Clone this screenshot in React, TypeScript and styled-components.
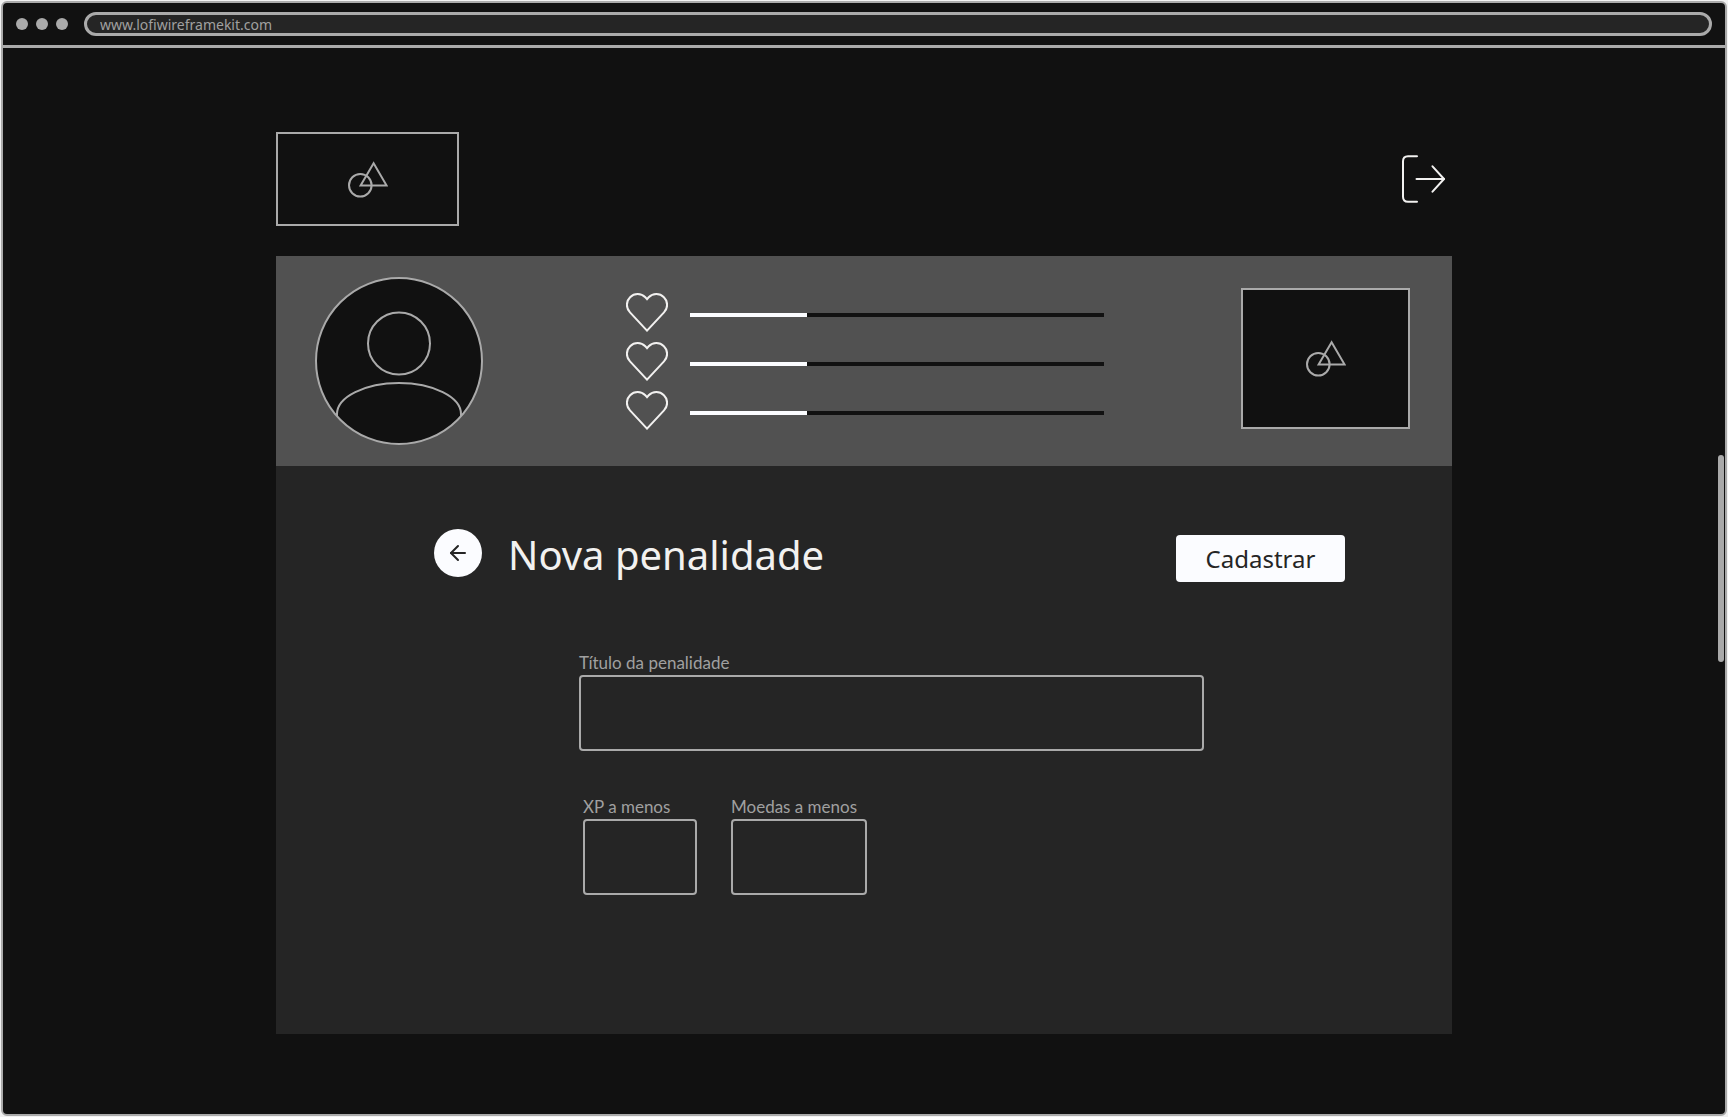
import React from 'react';
import styled, { createGlobalStyle } from 'styled-components';
import { ArrowLeft } from 'lucide-react';

const color = {
  ink: '#111111',
  surface: '#252525',
  band: '#515151',
  line: '#aaaaaa',
  label: '#a0a0a0',
  text: '#f2f1f0',
  light: '#fbfcff',
};

const displayFont = '"Noto Sans", "Open Sans", sans-serif';
const labelFont = 'Lato, "Noto Sans", sans-serif';

const GlobalStyle = createGlobalStyle`
  *, *::before, *::after { box-sizing: border-box; }
  body {
    margin: 0;
    background: #f1f1f1;
    font-family: ${displayFont};
  }
`;

const Page = styled.div`
  min-height: 100vh;
  padding: 1px;
  display: flex;
`;

const BrowserWindow = styled.div`
  flex: 1;
  min-width: 0;
  display: flex;
  flex-direction: column;
  border: 2px solid ${color.line};
  border-radius: 6px;
  background: ${color.ink};
`;

const BrowserBar = styled.header`
  display: flex;
  align-items: center;
  gap: 16px;
  height: 45px;
  padding: 0 13px;
  border-bottom: 3px solid ${color.line};
`;

const Dots = styled.div`
  display: flex;
  gap: 8px;
`;

const Dot = styled.span`
  width: 12px;
  height: 12px;
  border-radius: 50%;
  background: ${color.line};
`;

const AddressInput = styled.input`
  flex: 1;
  min-width: 0;
  height: 24px;
  padding: 0 13px;
  border: 3px solid ${color.line};
  border-radius: 12px;
  background: ${color.surface};
  color: ${color.label};
  font-family: ${displayFont};
  font-size: 14px;
  line-height: 18px;
`;

const Content = styled.div`
  width: 100%;
  max-width: 1176px;
  margin: 0 auto;
  padding: 84px 0 80px;
  display: flex;
  flex-direction: column;
  gap: 30px;
`;

const TopBar = styled.div`
  display: flex;
  align-items: center;
  justify-content: space-between;
  padding-right: 7px;
`;

const Placeholder = styled.div<{ $width: number; $height: number }>`
  flex: none;
  display: flex;
  align-items: center;
  justify-content: center;
  width: ${(p) => p.$width}px;
  height: ${(p) => p.$height}px;
  border: 2px solid ${color.line};
  background: ${color.ink};
`;

const IconButton = styled.button`
  display: flex;
  padding: 0;
  border: 0;
  background: none;
  color: ${color.text};
  cursor: pointer;
`;

const Panel = styled.main`
  background: ${color.surface};
`;

const PlayerBand = styled.section`
  display: flex;
  align-items: center;
  height: 210px;
  padding: 0 42px 0 39px;
  background: ${color.band};
`;

const ItemSlot = styled.div`
  padding-bottom: 5px;
`;

const Stats = styled.div`
  flex: 1;
  min-width: 0;
  display: flex;
  flex-direction: column;
  gap: 10px;
  margin: 1px 137px 0 143px;
`;

const StatRow = styled.div`
  display: flex;
  align-items: center;
  gap: 22px;
  color: ${color.text};
`;

const Meter = styled.progress`
  appearance: none;
  display: block;
  flex: 1;
  min-width: 0;
  height: 4px;
  margin-top: 5px;
  border: 0;
  background: ${color.ink};

  &::-webkit-progress-bar {
    background: ${color.ink};
  }
  &::-webkit-progress-value {
    background: ${color.light};
  }
  &::-moz-progress-bar {
    background: ${color.light};
  }
`;

const TitleRow = styled.div`
  display: flex;
  justify-content: space-between;
  height: 53px;
  margin: 63px 107px 0 158px;
`;

const TitleGroup = styled.div`
  display: flex;
  align-items: flex-start;
  gap: 26px;
`;

const BackButton = styled.button`
  flex: none;
  display: flex;
  align-items: center;
  justify-content: center;
  width: 48px;
  height: 48px;
  padding: 0;
  border: 0;
  border-radius: 50%;
  background: ${color.light};
  color: ${color.surface};
  cursor: pointer;
`;

const Title = styled.h1`
  margin: 0;
  color: ${color.text};
  font-size: 40px;
  font-weight: 400;
  line-height: 52px;
  white-space: nowrap;
`;

const SubmitButton = styled.button`
  align-self: flex-end;
  width: 169px;
  height: 47px;
  padding: 0;
  border: 0;
  border-radius: 4px;
  background: ${color.light};
  color: ${color.surface};
  font-family: ${displayFont};
  font-size: 24px;
  line-height: 32px;
  cursor: pointer;
`;

const Form = styled.form`
  display: flex;
  flex-direction: column;
  gap: 44px;
  padding: 69px 248px 139px 303px;
`;

const FieldRow = styled.div`
  display: flex;
  gap: 34px;
  padding-left: 4px;
`;

const Field = styled.div<{ $width?: number }>`
  display: flex;
  flex-direction: column;
  width: ${(p) => (p.$width ? `${p.$width}px` : '100%')};
`;

const Label = styled.label`
  color: ${color.label};
  font-family: ${labelFont};
  font-size: 17px;
  line-height: 24px;
  white-space: nowrap;
`;

const TextInput = styled.input`
  width: 100%;
  height: 76px;
  padding: 0 16px;
  border: 2px solid ${color.line};
  border-radius: 4px;
  background: transparent;
  color: ${color.text};
  font-family: ${labelFont};
  font-size: 17px;
`;

const ScrollRail = styled.div`
  position: fixed;
  top: 0;
  right: 4px;
  bottom: 0;
  display: flex;
  align-items: center;
`;

const ScrollThumb = styled.div`
  width: 6px;
  height: 207px;
  border-radius: 3px;
  background: ${color.line};
`;

const ShapesIcon = () => (
  <svg width="41" height="37" viewBox="0 0 41 37" fill="none" stroke={color.line} strokeWidth="2" aria-hidden="true">
    <circle cx="13.3" cy="24.2" r="11.3" />
    <path d="M26.6 2.2 L13.6 24.6 H39.6 Z" />
  </svg>
);

const LogoutIcon = () => (
  <svg
    width="44"
    height="50"
    viewBox="0 0 44 50"
    fill="none"
    stroke="currentColor"
    strokeWidth="2"
    strokeLinecap="round"
    strokeLinejoin="round"
    aria-hidden="true"
  >
    <path d="M16 2.3 H7 Q2 2.3 2 7.3 V42.7 Q2 47.7 7 47.7 H16" />
    <path d="M15.5 25 H43" />
    <path d="M31.5 12.3 L43 25 L31.5 37.7" />
  </svg>
);

const HeartIcon = () => (
  <svg width="42" height="39" viewBox="0 0 42 39" fill="none" stroke="currentColor" strokeWidth="2" aria-hidden="true">
    <path d="M21 6.2 L19.3 4.3 A10.6 10.6 0 0 0 4 19.4 L21 37.6 L38 19.4 A10.6 10.6 0 0 0 22.7 4.3 Z" />
  </svg>
);

const AvatarIcon = () => (
  <svg width="168" height="168" viewBox="0 0 168 168" fill="none" stroke={color.line} strokeWidth="2" role="img" aria-label="Avatar">
    <clipPath id="avatar-clip">
      <circle cx="84" cy="84" r="83" />
    </clipPath>
    <circle cx="84" cy="84" r="83" fill={color.ink} />
    <circle cx="84" cy="66.5" r="31" />
    <path d="M22 145 V137 C22 120 50 106 84 106 C118 106 146 120 146 137 V145" clipPath="url(#avatar-clip)" />
  </svg>
);

const stats = [
  { name: 'Vida', value: 117 },
  { name: 'Energia', value: 117 },
  { name: 'XP', value: 117 },
];

export default function App() {
  return (
    <>
      <GlobalStyle />
      <Page>
        <BrowserWindow>
          <BrowserBar>
            <Dots>
              <Dot />
              <Dot />
              <Dot />
            </Dots>
            <AddressInput aria-label="URL" defaultValue="www.lofiwireframekit.com" />
          </BrowserBar>

          <Content>
            <TopBar>
              <Placeholder $width={183} $height={94}>
                <ShapesIcon />
              </Placeholder>
              <IconButton type="button" aria-label="Sair">
                <LogoutIcon />
              </IconButton>
            </TopBar>

            <Panel>
              <PlayerBand>
                <AvatarIcon />
                <Stats>
                  {stats.map((stat) => (
                    <StatRow key={stat.name}>
                      <HeartIcon />
                      <Meter aria-label={stat.name} value={stat.value} max={414} />
                    </StatRow>
                  ))}
                </Stats>
                <ItemSlot>
                  <Placeholder $width={169} $height={141}>
                    <ShapesIcon />
                  </Placeholder>
                </ItemSlot>
              </PlayerBand>

              <TitleRow>
                <TitleGroup>
                  <BackButton type="button" aria-label="Voltar">
                    <ArrowLeft size={24} />
                  </BackButton>
                  <Title>Nova penalidade</Title>
                </TitleGroup>
                <SubmitButton type="submit" form="penalty-form">
                  Cadastrar
                </SubmitButton>
              </TitleRow>

              <Form id="penalty-form" onSubmit={(event) => event.preventDefault()}>
                <Field>
                  <Label htmlFor="title">Título da penalidade</Label>
                  <TextInput id="title" type="text" />
                </Field>
                <FieldRow>
                  <Field $width={114}>
                    <Label htmlFor="xp">XP a menos</Label>
                    <TextInput id="xp" type="text" inputMode="numeric" />
                  </Field>
                  <Field $width={136}>
                    <Label htmlFor="coins">Moedas a menos</Label>
                    <TextInput id="coins" type="text" inputMode="numeric" />
                  </Field>
                </FieldRow>
              </Form>
            </Panel>
          </Content>
        </BrowserWindow>
      </Page>
      <ScrollRail>
        <ScrollThumb />
      </ScrollRail>
    </>
  );
}
